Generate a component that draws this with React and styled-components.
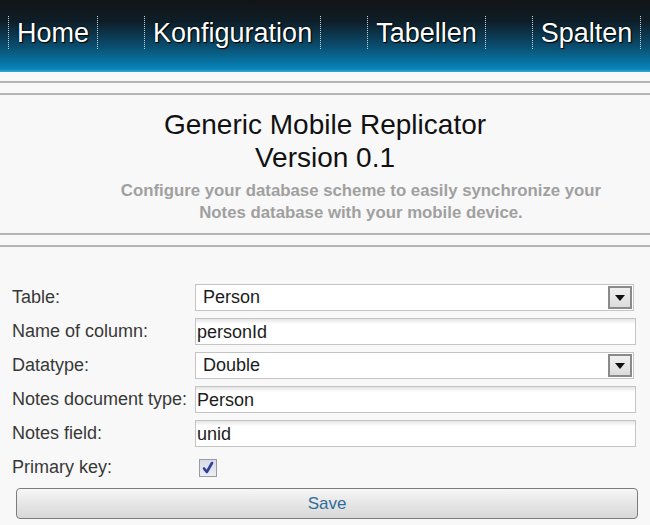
import React from "react";
import styled, { createGlobalStyle } from "styled-components";

const GlobalStyle = createGlobalStyle`
  html, body {
    margin: 0;
    padding: 0;
    background: #f8f8f8;
    font-family: "Liberation Sans", Arial, sans-serif;
  }
`;

const Header = styled.div`
  height: 72px;
  box-sizing: border-box;
  background: linear-gradient(
    to bottom,
    #121416 0%,
    #0e1e28 30%,
    #0a4e70 65%,
    #0785ba 96%,
    #3aa8d4 100%
  );
  padding-top: 16px;
`;

const NavList = styled.ul`
  list-style: none;
  margin: 0;
  padding: 0 0 0 8px;
  display: flex;
  gap: 46px;
`;

const NavItem = styled.li`
  height: 33px;
  box-sizing: border-box;
  padding: 2px 8px 0;
  border-left: 1px dotted #c8d4dc;
  border-right: 1px dotted #c8d4dc;
  font-size: 27px;
  line-height: 31px;
  color: #ffffff;
  text-shadow: 0 0 2px #000, 1px 1px 1px #000;
  white-space: nowrap;
`;

const Rule = styled.div`
  height: 2px;
  background: #b4b4b4;
  margin-top: ${(p) => p.$top}px;
`;

const Intro = styled.div`
  text-align: center;
  padding-top: 13px;
`;

const Title = styled.h1`
  margin: 0;
  font-size: 28px;
  font-weight: normal;
  line-height: 33px;
  color: #111;
`;

const Subtitle = styled.p`
  margin: 6px auto 0;
  padding-left: 72px;
  font-size: 16.8px;
  font-weight: bold;
  line-height: 22px;
  color: #a0a0a0;
  width: 520px;
`;

const Form = styled.form`
  margin: 37px 0 0;
  padding: 0 12px 0 12px;
  display: flex;
  flex-direction: column;
  gap: 7px;
`;

const Row = styled.div`
  display: grid;
  grid-template-columns: 183px ${(p) => (p.$narrow ? "439px" : "441px")};
  align-items: center;
  height: 27px;
`;

const Label = styled.label`
  font-size: 18px;
  color: #383838;
  white-space: nowrap;
`;

const TextInput = styled.input`
  box-sizing: border-box;
  height: 27px;
  width: 100%;
  margin: 0;
  padding: 1px 1px 0;
  border: 1px solid #c4c4c4;
  background: linear-gradient(to bottom, #e4e4e4 0px, #ffffff 5px, #ffffff 100%);
  font-family: "Liberation Sans", Arial, sans-serif;
  font-size: 18px;
  color: #1c1c1c;
  outline: none;
`;

const SelectBox = styled.div`
  box-sizing: border-box;
  height: 27px;
  display: flex;
  align-items: center;
  border: 1px solid #c4c4c4;
  background: #ffffff;
  padding: 0 1px 0 7px;
`;

const SelectValue = styled.span`
  flex: 1;
  font-size: 18px;
  color: #1c1c1c;
`;

const ArrowButton = styled.span`
  box-sizing: border-box;
  width: 24px;
  height: 23px;
  display: flex;
  align-items: center;
  justify-content: center;
  border: 2px solid #8a8a8a;
  background: linear-gradient(to bottom, #f0f0f0, #dcdcdc);
`;

const CheckBox = styled.span`
  box-sizing: border-box;
  width: 18px;
  height: 18px;
  margin-left: 4px;
  display: flex;
  align-items: center;
  justify-content: center;
  border: 1px solid #9a9ca4;
  background: linear-gradient(to bottom, #d8dbe4, #eceef3);
`;

const SaveButton = styled.button`
  box-sizing: border-box;
  height: 31px;
  width: 622px;
  margin: 0 0 0 4px;
  border: 1px solid #7c7c7c;
  border-radius: 4px;
  background: linear-gradient(to bottom, #f6f6f6 0%, #e6e6e6 50%, #d8d8d8 100%);
  font-family: "Liberation Sans", Arial, sans-serif;
  font-size: 17px;
  color: #2f6c98;
  cursor: pointer;
`;

const Arrow = () => (
  <svg width="10" height="6" viewBox="0 0 10 6">
    <path d="M0 0 H10 L5 6 Z" fill="#111" />
  </svg>
);

const Check = () => (
  <svg width="14" height="14" viewBox="0 0 14 14">
    <path
      d="M3 7.5 L5.8 11 L11 2"
      fill="none"
      stroke="#2f3f9e"
      strokeWidth="2.6"
      strokeLinecap="round"
      strokeLinejoin="round"
    />
  </svg>
);

const Select = ({ value }) => (
  <SelectBox>
    <SelectValue>{value}</SelectValue>
    <ArrowButton>
      <Arrow />
    </ArrowButton>
  </SelectBox>
);

const navItems = ["Home", "Konfiguration", "Tabellen", "Spalten"];

export default function App() {
  return (
    <>
      <GlobalStyle />
      <Header>
        <NavList>
          {navItems.map((item) => (
            <NavItem key={item}>{item}</NavItem>
          ))}
        </NavList>
      </Header>
      <Rule $top={9} />
      <Rule $top={10} />
      <Intro>
        <Title>
          Generic Mobile Replicator
          <br />
          Version 0.1
        </Title>
        <Subtitle>
          Configure your database scheme to easily synchronize your Notes
          database with your mobile device.
        </Subtitle>
      </Intro>
      <Rule $top={9} />
      <Rule $top={10} />
      <Form onSubmit={(e) => e.preventDefault()}>
        <Row $narrow>
          <Label>Table:</Label>
          <Select value="Person" />
        </Row>
        <Row>
          <Label>Name of column:</Label>
          <TextInput defaultValue="personId" />
        </Row>
        <Row $narrow>
          <Label>Datatype:</Label>
          <Select value="Double" />
        </Row>
        <Row>
          <Label>Notes document type:</Label>
          <TextInput defaultValue="Person" />
        </Row>
        <Row>
          <Label>Notes field:</Label>
          <TextInput defaultValue="unid" />
        </Row>
        <Row>
          <Label>Primary key:</Label>
          <CheckBox>
            <Check />
          </CheckBox>
        </Row>
        <SaveButton type="submit">Save</SaveButton>
      </Form>
    </>
  );
}
